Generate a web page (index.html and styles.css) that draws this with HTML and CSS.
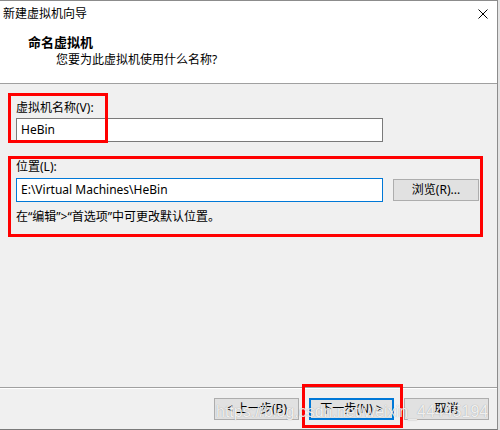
FILE: index.html
```html
<!DOCTYPE html>
<html lang="zh-CN">
<head>
<meta charset="utf-8">
<title>新建虚拟机向导</title>
<link rel="stylesheet" href="styles.css">
</head>
<body>
<div class="window">
  <div class="titlebar">
    <span class="title">新建虚拟机向导</span>
    <svg class="close" width="10" height="10" viewBox="0 0 10 10"><path d="M0.5 0.5 L9.5 9.5 M9.5 0.5 L0.5 9.5" stroke="#000" stroke-width="1" fill="none"/></svg>
  </div>
  <div class="header">
    <div class="h-title">命名虚拟机</div>
    <div class="h-sub">您要为此虚拟机使用什么名称?</div>
  </div>
  <div class="content">
    <div class="field">
      <div class="label">虚拟机名称(V):</div>
      <div class="input">HeBin</div>
    </div>
    <div class="field loc">
      <div class="label">位置(L):</div>
      <div class="row">
        <div class="input focus">E:\Virtual Machines\HeBin</div>
        <div class="btn browse">浏览(R)...</div>
      </div>
      <div class="hint">在“编辑”&gt;“首选项”中可更改默认位置。</div>
    </div>
  </div>
  <div class="footer">
    <div class="btn">&lt; 上一步(B)</div>
    <div class="btn default">下一步(N) &gt;</div>
    <div class="btn">取消</div>
  </div>
  <div class="mark mark-name"></div>
  <div class="mark mark-loc"></div>
  <div class="mark mark-next"></div>
  <div class="watermark">https://blog.csdn.net/weixin_44445194</div>
</div>
</body>
</html>
```

FILE: styles.css
```css
html, body {
  margin: 0;
  padding: 0;
  background: #e4e4e4;
}
body {
  width: 500px;
  height: 430px;
  overflow: hidden;
  font-family: "Noto Sans", "Noto Sans CJK SC", sans-serif;
  font-size: 12px;
  color: #000;
}
.window {
  position: relative;
  width: 498px;
  height: 430px;
  box-sizing: border-box;
  border-top: 1px solid #8c8c8c;
  border-right: 1px solid #8c8c8c;
  border-bottom: 1px solid #7a7a7a;
  background: #f0f0f0;
  display: flex;
  flex-direction: column;
}
.titlebar {
  height: 26px;
  flex: none;
  background: #fff;
  display: flex;
  align-items: center;
  justify-content: space-between;
  padding: 0 9px 0 3px;
}
.title {
  line-height: 16px;
}
.close {
  display: block;
}
.header {
  flex: none;
  background: #fff;
  padding: 7px 0 15px 28px;
  border-bottom: 1px solid #a0a0a0;
}
.h-title {
  font-weight: bold;
  font-size: 13px;
  line-height: 16px;
}
.h-sub {
  margin-top: 2px;
  padding-left: 28px;
  line-height: 16px;
}
.content {
  flex: 1;
  padding: 16px 0 0 16px;
}
.label {
  line-height: 16px;
}
.input {
  margin-top: 2px;
  width: 367px;
  height: 24px;
  box-sizing: border-box;
  border: 1px solid #7a7a7a;
  background: #fff;
  padding-left: 4px;
  line-height: 22px;
  white-space: nowrap;
}
.input.focus {
  border-color: #0078d7;
  margin-top: 0;
}
.loc {
  margin-top: 17px;
}
.row {
  margin-top: 3px;
  display: flex;
  align-items: center;
  gap: 10px;
}
.btn {
  width: 85px;
  height: 22px;
  box-sizing: border-box;
  border: 1px solid #adadad;
  background: #e1e1e1;
  display: flex;
  align-items: center;
  justify-content: center;
  line-height: 16px;
  white-space: nowrap;
}
.browse {
  width: 86px;
}
.hint {
  margin-top: 7px;
  line-height: 16px;
}
.footer {
  flex: none;
  height: 42px;
  box-sizing: border-box;
  border-top: 1px solid #a0a0a0;
  box-shadow: inset 0 1px 0 #ffffff;
  padding: 10px 8px 0 0;
  display: flex;
  justify-content: flex-end;
  align-items: flex-start;
  gap: 10px;
}
.btn.default {
  border: 2px solid #0078d7;
}
.mark {
  position: absolute;
  box-sizing: border-box;
  border: 3px solid #ff0000;
}
.mark-name {
  left: 8px;
  top: 92px;
  width: 100px;
  height: 50px;
}
.mark-loc {
  left: 8px;
  top: 155px;
  width: 475px;
  height: 81px;
}
.mark-next {
  left: 302px;
  top: 383px;
  width: 101px;
  height: 44px;
}
.watermark {
  position: absolute;
  left: 216px;
  top: 401px;
  font-family: "Liberation Sans", sans-serif;
  font-size: 16px;
  line-height: 20px;
  color: rgba(255, 255, 255, 0.85);
  text-shadow: 0 0 1px rgba(0, 0, 0, 0.35);
  white-space: nowrap;
  pointer-events: none;
}
```
